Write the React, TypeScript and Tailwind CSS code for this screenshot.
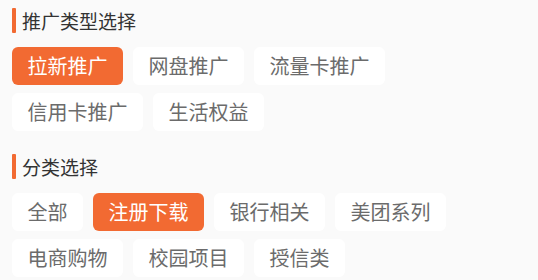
import { useState } from 'react'

const promoTypes = ['拉新推广', '网盘推广', '流量卡推广', '信用卡推广', '生活权益']
const categories = ['全部', '注册下载', '银行相关', '美团系列', '电商购物', '校园项目', '授信类']

function SectionTitle({ title }: { title: string }) {
  return (
    <div className="flex items-center h-[25px]">
      <div className="w-1 h-[25px] bg-[#f26a32] rounded-[1px]" />
      <h2 className="ml-[6px] text-[19px] leading-[25px] text-[#333333]">{title}</h2>
    </div>
  )
}

function ChipGroup({ items, active, onSelect }: { items: string[]; active: string; onSelect: (v: string) => void }) {
  return (
    <div className="flex flex-wrap gap-x-[10px] gap-y-2">
      {items.map((item) => (
        <button
          key={item}
          onClick={() => onSelect(item)}
          className={
            item === active
              ? 'h-[38px] px-[15.5px] rounded-md bg-[#f26a32] text-white text-[20px] leading-[38px]'
              : 'h-[38px] px-[15.5px] rounded-md bg-white text-[#6b6b6b] text-[20px] leading-[38px]'
          }
        >
          {item}
        </button>
      ))}
    </div>
  )
}

export default function App() {
  const [promo, setPromo] = useState('拉新推广')
  const [category, setCategory] = useState('注册下载')

  return (
    <div
      className="w-[538px] h-[280px] bg-[#fafafa] pl-3 pr-8 pt-2 overflow-hidden"
      style={{ fontFamily: '"Noto Sans CJK SC", "Noto Sans", sans-serif' }}
    >
      {/* 推广类型 */}
      <SectionTitle title="推广类型选择" />
      <div className="mt-[14px]">
        <ChipGroup items={promoTypes} active={promo} onSelect={setPromo} />
      </div>

      {/* 分类 */}
      <div className="mt-[23px]">
        <SectionTitle title="分类选择" />
      </div>
      <div className="mt-[14px]">
        <ChipGroup items={categories} active={category} onSelect={setCategory} />
      </div>
    </div>
  )
}
